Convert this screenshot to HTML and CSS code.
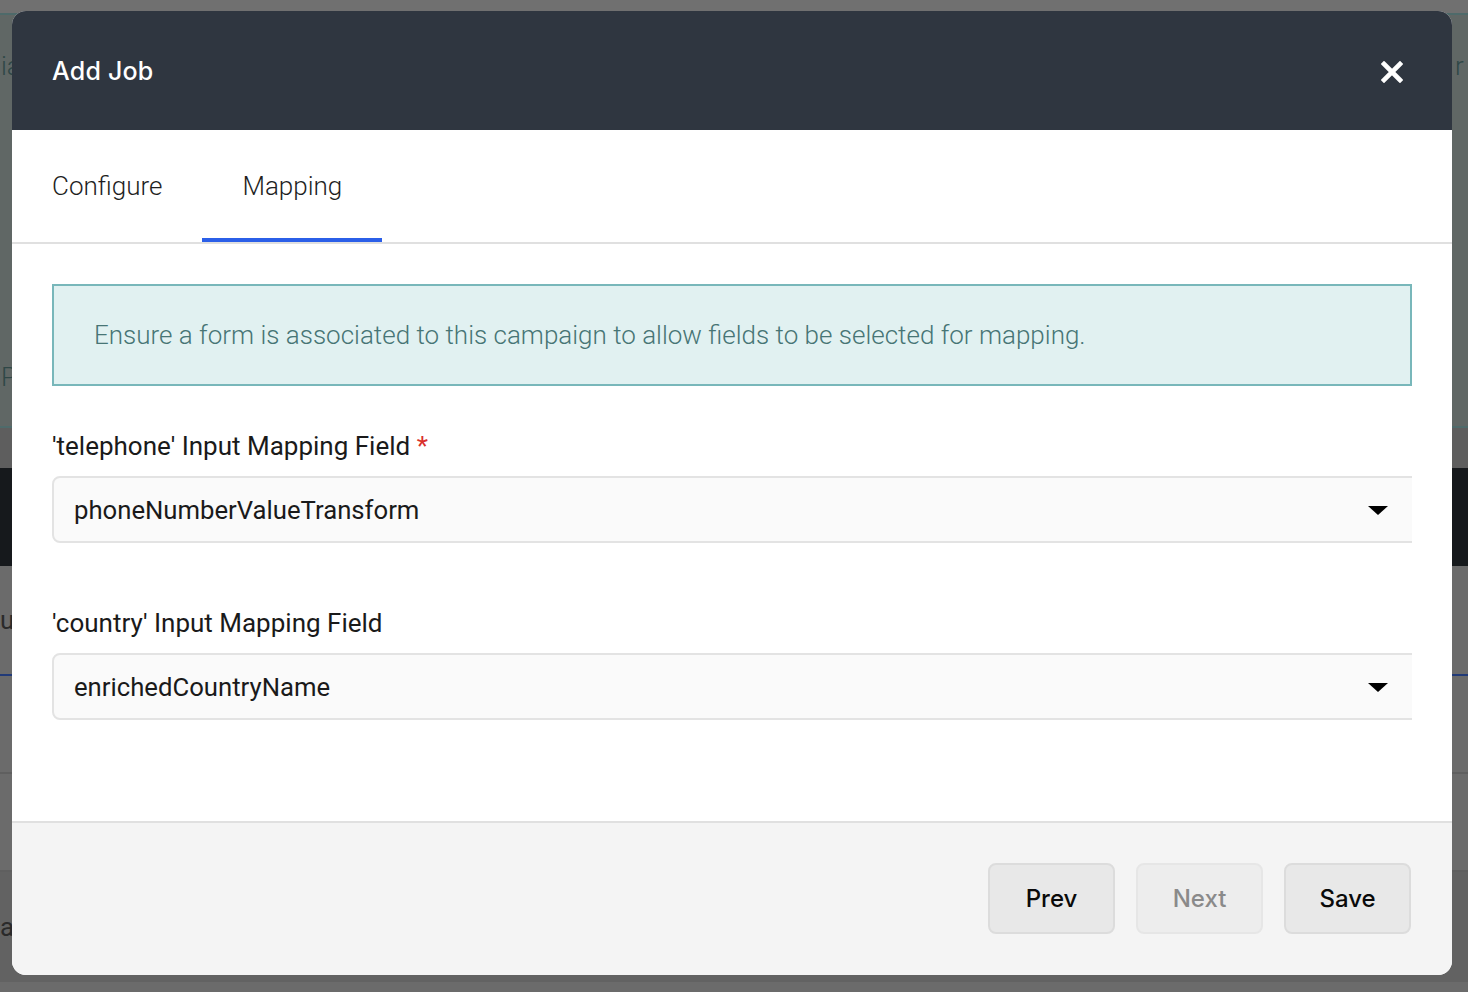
FILE: index.html
```html
<!DOCTYPE html>
<html lang="en">
<head>
  <meta charset="UTF-8">
  <meta name="viewport" content="width=device-width, initial-scale=1.0">
  <title>Add Job</title>
  <link rel="stylesheet" href="styles.css">
</head>
<body>

  <!-- page behind the dimmed overlay -->
  <div class="pagina">
    <div class="faixa-topo"></div>
    <div class="painel">
      <div class="linha-texto"><span>ia</span><span>r _</span></div>
      <div class="linha-texto"><span>Pr</span><span></span></div>
    </div>
    <div class="faixa-cinza"></div>
    <div class="faixa-escura"></div>
    <div class="faixa-lista">
      <div class="item-lista"><span>u</span></div>
      <div class="item-lista"></div>
      <div class="item-lista"></div>
      <div class="item-lista item-final"><span>ar</span></div>
    </div>
  </div>

  <div class="modal">
    <header class="modal-topo">
      <h1>Add Job</h1>
      <button class="fechar" aria-label="Fechar">
        <svg width="22" height="22" viewBox="0 0 22 22">
          <path d="M3 3 L19 19 M19 3 L3 19" stroke="#fff" stroke-width="4.6" stroke-linecap="square" fill="none"/>
        </svg>
      </button>
    </header>

    <nav class="abas">
      <div class="aba">Configure</div>
      <div class="aba ativa">Mapping</div>
    </nav>

    <main class="conteudo">
      <div class="aviso">
        Ensure a form is associated to this campaign to allow fields to be selected for mapping.
      </div>

      <div class="campo">
        <label>'telephone' Input Mapping Field <span class="obrigatorio">*</span></label>
        <div class="corte">
          <div class="seletor">
            <span>phoneNumberValueTransform</span>
            <span class="seta"></span>
          </div>
        </div>
      </div>

      <div class="campo">
        <label>'country' Input Mapping Field</label>
        <div class="corte">
          <div class="seletor">
            <span>enrichedCountryName</span>
            <span class="seta"></span>
          </div>
        </div>
      </div>
    </main>

    <footer class="rodape">
      <button class="botao">Prev</button>
      <button class="botao desativado">Next</button>
      <button class="botao">Save</button>
    </footer>
  </div>

</body>
</html>
```

FILE: styles.css
```css
:root {
  --escuro: #2f3640;
  --azul: #2b5fe8;
  --borda: #e0e0e0;
}
body {
  margin: 0;
  padding: 0;
  overflow: hidden;
  background-color: #5b5b5b;
  font-family: Roboto, "Noto Sans", sans-serif;
}

/* fundo */
.pagina {
  height: 992px;
  display: flex;
  flex-direction: column;
}
.faixa-topo {
  height: 13px;
  background-color: #707070;
  border-bottom: 2px solid #4e6a6a;
}
.painel {
  height: 413px;
  background-color: #606765;
  border-bottom: 2px solid #4f6b6b;
  display: flex;
  flex-direction: column;
  justify-content: space-between;
  padding: 36px 0 34px;
  box-sizing: border-box;
}
.linha-texto {
  display: flex;
  justify-content: space-between;
  font-size: 26px;
  font-weight: 300;
  color: #2f4747;
  padding: 0 0 0 1px;
}
.linha-texto span:last-child {
  width: 13px;
  white-space: nowrap;
  overflow: hidden;
}
.faixa-cinza {
  height: 40px;
  background-color: #5e5e5e;
}
.faixa-escura {
  height: 98px;
  background-color: #16191c;
}
.faixa-lista {
  flex: 1;
  background-color: #6b6b6b;
}
.item-lista {
  height: 110px;
  border-bottom: 2px solid #5f5f5f;
  font-size: 26px;
  color: #2a2a2a;
  display: flex;
  align-items: center;
  box-sizing: border-box;
}
.item-lista:first-child {
  border-bottom-color: #213a78;
}
.item-lista:nth-child(2),
.item-lista:nth-child(3) {
  height: 98px;
}
.item-final {
  border-bottom: none;
  background-color: #626262;
}

/* modal */
.modal {
  position: absolute;
  top: 11px;
  left: 12px;
  width: 1440px;
  height: 964px;
  background-color: #ffffff;
  border-radius: 14px;
  overflow: hidden;
  display: flex;
  flex-direction: column;
}
.modal-topo {
  height: 119px;
  flex-shrink: 0;
  background-color: var(--escuro);
  display: flex;
  align-items: center;
  justify-content: space-between;
  padding: 0 49px 0 40px;
}
.modal-topo h1 {
  margin: 0;
  font-family: Inter, "Noto Sans", sans-serif;
  font-size: 25px;
  font-weight: 500;
  color: #ffffff;
  letter-spacing: 0.2px;
}
.fechar {
  background: none;
  border: none;
  padding: 0;
  cursor: pointer;
  display: flex;
  margin-top: 2px;
}

.abas {
  display: flex;
  flex-shrink: 0;
  border-bottom: 2px solid var(--borda);
}
.aba {
  height: 112px;
  box-sizing: border-box;
  padding: 0 40px;
  display: flex;
  align-items: center;
  font-size: 26px;
  font-weight: 300;
  color: #1f1f1f;
  cursor: pointer;
}
.aba.ativa {
  box-shadow: inset 0 -4px 0 var(--azul);
}

.conteudo {
  flex: 1;
  padding: 40px 40px 0;
}
.aviso {
  height: 102px;
  box-sizing: border-box;
  background-color: #e1f1f1;
  border: 2px solid #78b7ba;
  color: #477575;
  font-size: 26px;
  font-weight: 300;
  display: flex;
  align-items: center;
  padding: 0 40px;
}
.campo {
  margin-top: 45px;
}
.campo + .campo {
  margin-top: 65px;
}
.campo label {
  display: block;
  font-size: 26px;
  line-height: 30px;
  color: #1a1a1a;
}
.obrigatorio {
  color: #d9302c;
}
.corte {
  margin-top: 15px;
  overflow: hidden;
}
.seletor {
  width: calc(100% + 20px);
  height: 67px;
  box-sizing: border-box;
  background-color: #fafafa;
  border: 2px solid #e3e3e3;
  border-radius: 8px;
  display: flex;
  align-items: center;
  justify-content: space-between;
  padding: 0 0 0 20px;
  font-size: 25.7px;
  color: #1a1a1a;
}
.seta {
  width: 0;
  height: 0;
  border-left: 10px solid transparent;
  border-right: 10px solid transparent;
  border-top: 9px solid #000;
  margin-right: 42px;
  margin-top: 2px;
}

.rodape {
  height: 154px;
  flex-shrink: 0;
  box-sizing: border-box;
  background-color: #f4f4f4;
  border-top: 2px solid var(--borda);
  display: flex;
  justify-content: flex-end;
  align-items: flex-start;
  gap: 21px;
  padding: 40px 41px 0;
}
.botao {
  width: 127px;
  height: 71px;
  background-color: #e8e8e8;
  border: 2px solid #dcdcdc;
  border-radius: 8px;
  font-family: Inter, "Noto Sans", sans-serif;
  font-size: 24px;
  font-weight: 500;
  color: #0a0a0a;
  cursor: pointer;
}
.botao.desativado {
  background-color: #ededed;
  border-color: #e6e6e6;
  color: #8a8a8a;
  cursor: default;
}
```
